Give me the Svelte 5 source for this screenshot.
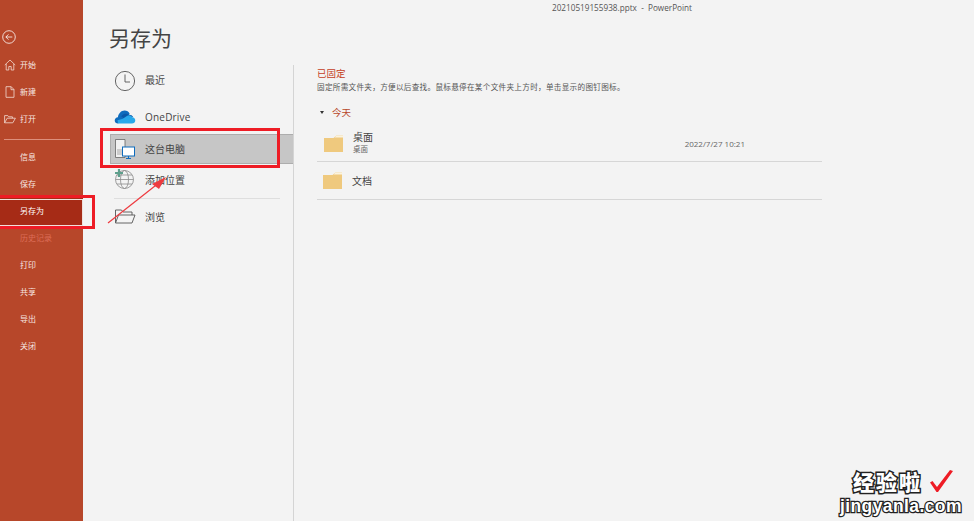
<script>
  const topItems = [
    { label: '开始', icon: 'home' },
    { label: '新建', icon: 'file' },
    { label: '打开', icon: 'open' }
  ];
  const lowerItems = [
    { label: '信息' },
    { label: '保存' },
    { label: '另存为', active: true },
    { label: '历史记录', disabled: true },
    { label: '打印' },
    { label: '共享' },
    { label: '导出' },
    { label: '关闭' }
  ];
</script>

<div class="page">
  <aside class="sidebar">
    <button class="back" aria-label="返回">
      <svg width="14" height="14" viewBox="0 0 16 16" fill="none" stroke="#fff" stroke-width="0.9">
        <circle cx="8" cy="8" r="7.2" />
        <path d="M4.400 8h7.400M7.400 5 4.400 8l3 3" />
      </svg>
    </button>
    <ul class="menu">
      {#each topItems as item}
        <li class="menu-item">
          <span class="menu-icon">
            {#if item.icon === 'home'}
              <svg width="12" height="12" viewBox="0 0 12 12" fill="none" stroke="#f3dcd3" stroke-width="0.8">
                <path d="M.8 6 6 1l5.200 5M2.200 5v6h2.600V7.500h2.400V11h2.600V5" />
              </svg>
            {:else if item.icon === 'file'}
              <svg width="12" height="12" viewBox="0 0 12 12" fill="none" stroke="#f3dcd3" stroke-width="0.8">
                <path d="M2 .7h5.200L10 3.500v7.800H2zM7 .7v3h3" />
              </svg>
            {:else}
              <svg width="12" height="12" viewBox="0 0 12 12" fill="none" stroke="#f3dcd3" stroke-width="0.8">
                <path d="M.6 9.800V2.600h3.200l1 1.200h3.600v1.400M.6 9.800h8.200l2.600-4.600H3.200z" />
              </svg>
            {/if}
          </span>
          {item.label}
        </li>
      {/each}
    </ul>
    <div class="menu-rule"></div>
    <ul class="menu">
      {#each lowerItems as item}
        <li class="menu-item" class:active={item.active} class:disabled={item.disabled}>
          <span class="menu-icon"></span>
          {item.label}
        </li>
      {/each}
    </ul>
  </aside>

  <main class="content">
    <div class="titlebar">20210519155938.pptx &nbsp;-&nbsp; PowerPoint</div>
    <h1 class="heading">另存为</h1>

    <div class="columns">
      <nav class="places">
        <div class="place recent">
          <svg width="22" height="22" viewBox="0 0 22 22" fill="none" stroke="#555" stroke-width="0.9">
            <circle cx="11" cy="11" r="9.600" />
            <path d="M11 4.500V12h5" />
          </svg>
          <span>最近</span>
        </div>
        <div class="place onedrive">
          <svg width="20" height="14" viewBox="0 0 22 15">
            <path d="M3.500 14.500C1.400 14.500 0 13 0 11.200 0 9.300 1.500 7.800 3.400 7.800 4 3.500 7 .5 10.500.5c2.500 0 4.500 1.300 5.500 3.400L13 7z" fill="#0f6cbd" />
            <path d="M8 5.500c2-1.500 5-2 7.800-.5 1.500 0 3 .8 3.800 2.200L13 11 7 7z" fill="#0a58a8" />
            <path d="M3.500 14.500h15c1.900 0 3.500-1.300 3.500-3.300 0-1.800-1.300-3.200-3.200-3.400-1-2.300-3.700-3-5.800-1.500L8.700 9.400 3 11z" fill="#28a8ea" />
          </svg>
          <span class="latin">OneDrive</span>
        </div>
        <div class="place pc">
          <svg width="20" height="20" viewBox="0 0 20 20" fill="none">
            <path d="M.5.500h9.500v18H.5z" fill="#f1f1f1" stroke="#666" stroke-width="0.8" />
            <path d="M2 11h5M2 13h5M2 15h5" stroke="#888" stroke-width="0.7" />
            <rect x="7.500" y="8" width="12" height="9" fill="#fff" stroke="#0f6cbd" />
            <path d="M13.500 17v2M11 19.500h5" stroke="#0f6cbd" />
          </svg>
          <span>这台电脑</span>
        </div>
        <div class="place add">
          <svg width="22" height="22" viewBox="0 0 22 22" fill="none" stroke="#8a8a8a" stroke-width="0.8">
            <circle cx="10.500" cy="11.500" r="9" />
            <ellipse cx="10.500" cy="11.500" rx="4" ry="9" />
            <path d="M1.500 11.500h18M3 7h15M3 16h15" />
            <path d="M5 1v8M1 5h8" stroke="#5e9f8c" stroke-width="2.200" />
          </svg>
          <span>添加位置</span>
        </div>
        <div class="place-rule"></div>
        <div class="place browse">
          <svg width="22" height="15" viewBox="0 0 22 15" fill="#f4f4f4" stroke="#555" stroke-width="0.9">
            <path d="M1.500 14V1h6l1.500 2h9v3" />
            <path d="M1.500 14h16.500l3-8H4.500z" />
          </svg>
          <span>浏览</span>
        </div>
      </nav>

      <section class="folders">
        <h2 class="pinned">已固定</h2>
        <p class="hint">固定所需文件夹，方便以后查找。鼠标悬停在某个文件夹上方时，单击显示的图钉图标。</p>
        <div class="group"><span class="caret"></span>今天</div>

        <div class="folder first">
          <svg class="folder-icon" width="19" height="17" viewBox="0 0 19 17">
            <path d="M0 3h9.500L12.500 .5H19V17H0z" fill="#efc97e" />
            <path d="M12.500 .5H19V2.500H10.500z" fill="#fbf3df" />
          </svg>
          <div class="folder-text">
            <div class="folder-name">桌面</div>
            <div class="folder-path">桌面</div>
          </div>
          <div class="folder-date">2022/7/27 10:21</div>
        </div>

        <div class="folder">
          <svg class="folder-icon" width="19" height="17" viewBox="0 0 19 17">
            <path d="M0 3h9.500L12.500 .5H19V17H0z" fill="#efc97e" />
            <path d="M12.500 .5H19V2.500H10.500z" fill="#fbf3df" />
          </svg>
          <div class="folder-text">
            <div class="folder-name">文档</div>
          </div>
        </div>
      </section>
    </div>
  </main>

  <!-- screenshot annotations -->
  <div class="mark mark-menu"></div>
  <div class="mark mark-pc"></div>
  <svg class="arrow" width="974" height="521" viewBox="0 0 974 521">
    <path d="M108 223 160 182" stroke="#ee3a3f" stroke-width="1.200" />
    <path d="M152 184l14-7-7 12z" fill="#ee3a3f" />
  </svg>

  <div class="watermark">
    <div class="wm-top">
      <span>经验啦</span>
      <svg width="24" height="24" viewBox="0 0 24 24">
        <path d="M1 13.500l2.500-1.500L8 18 21 1l3 1L9 23H7.500z" fill="#ee1c25" />
      </svg>
    </div>
    <div class="wm-url">jingyanla.com</div>
  </div>
</div>

<style>
  :global(body) {
    margin: 0;
    background: #f3f3f3;
  }

  .page {
    position: relative;
    display: flex;
    width: 974px;
    height: 521px;
    overflow: hidden;
    background: #f3f3f3;
    font-family: "Noto Sans CJK SC", "Noto Sans", sans-serif;
    color: #444;
  }

  .sidebar {
    flex: 0 0 83px;
    padding-top: 30px;
    box-sizing: border-box;
    background: #b7472a;
    color: #fff;
  }

  .back {
    display: block;
    width: 14px;
    height: 14px;
    margin: 0 0 8px 2px;
    padding: 0;
    border: 0;
    background: none;
  }

  .menu {
    list-style: none;
    margin: 0;
    padding: 0;
  }

  .menu-item {
    display: flex;
    align-items: center;
    box-sizing: border-box;
    height: 27px;
    padding-bottom: 2px;
    font-size: 8px;
    color: #f6e6e0;
  }

  .menu-icon {
    display: flex;
    flex: 0 0 20px;
    padding-left: 4px;
    box-sizing: border-box;
  }

  .menu-item.active {
    background: #a62b16;
    color: #fff;
  }

  .menu-item.disabled {
    color: #dc6d58;
  }

  .menu-rule {
    height: 1px;
    margin: 6px 13px 4px 4px;
    background: #dd8f7c;
  }

  .content {
    flex: 1;
    min-width: 0;
  }

  .titlebar {
    height: 16px;
    padding-left: 187px;
    font-size: 8.200px;
    line-height: 16px;
    text-align: center;
    color: #555;
    font-family: "Open Sans", sans-serif;
  }

  .heading {
    height: 47px;
    margin: 0;
    padding-left: 26px;
    font-size: 21px;
    font-weight: 400;
    line-height: 42px;
    color: #444;
  }

  .columns {
    display: flex;
    height: 458px;
  }

  .places {
    flex: 0 0 184px;
    margin: 2px 0 0 27px;
    box-sizing: border-box;
    border-right: 1px solid #d4d4d4;
  }

  .place {
    display: flex;
    align-items: center;
    gap: 9px;
    height: 32px;
    padding-left: 4px;
    font-size: 10px;
    color: #444;
  }

  .place svg {
    flex: 0 0 22px;
  }

  .place.recent {
    margin-top: -1px;
  }

  .recent svg {
    margin-top: 2px;
  }

  .recent span {
    padding-bottom: 2px;
  }

  .place.onedrive {
    margin-top: 5px;
  }

  .place.pc {
    box-sizing: border-box;
    width: 183px;
    height: 30px;
    margin-top: 1px;
    padding-left: 3px;
    border: 1px solid #adadad;
    border-right: 0;
    background: #c6c6c6;
  }

  .pc span {
    padding-bottom: 2px;
  }

  .place.add {
    margin-top: -1px;
  }

  .latin {
    font-family: "Open Sans", sans-serif;
    letter-spacing: 0.2px;
  }

  .place-rule {
    height: 1px;
    margin: 3px 13px 1px 4px;
    background: #dedede;
  }

  .folders {
    flex: 0 0 505px;
    margin-left: 23px;
    padding-top: 2px;
  }

  .pinned {
    margin: 0;
    font-size: 9.500px;
    font-weight: 400;
    line-height: 16px;
    color: #c43e1c;
  }

  .hint {
    margin: 0;
    font-size: 7.600px;
    line-height: 12px;
    letter-spacing: 0.3px;
    color: #555;
  }

  .group {
    display: flex;
    align-items: center;
    height: 20px;
    margin-top: 9px;
    font-size: 9.500px;
    color: #b7472a;
  }

  .caret {
    width: 0;
    height: 0;
    margin: 0 8px 0 3px;
    border-left: 2.500px solid transparent;
    border-right: 2.500px solid transparent;
    border-top: 3px solid #333;
  }

  .folder {
    display: flex;
    align-items: center;
    height: 37px;
    border-bottom: 1px solid #d6d6d6;
  }

  .folder.first {
    height: 36px;
    padding: 3px 0 0 1px;
  }

  .folder-icon {
    flex: 0 0 19px;
    margin-left: 6px;
  }

  .folder-text {
    margin-left: 10px;
  }

  .first .folder-text {
    margin-top: -2px;
  }

  .folder-name {
    font-size: 10px;
    line-height: 13px;
    color: #444;
  }

  .folder-path {
    font-size: 7.500px;
    line-height: 11px;
    color: #666;
  }

  .folder-date {
    margin-left: auto;
    padding-right: 77px;
    font-family: "Open Sans", sans-serif;
    font-size: 8px;
    color: #666;
  }

  .mark {
    position: absolute;
    box-sizing: border-box;
    border: 3px solid #ee1c25;
  }

  .mark-menu {
    left: -4px;
    top: 195px;
    width: 99px;
    height: 34px;
  }

  .mark-menu::after {
    content: "";
    position: absolute;
    left: 0;
    top: 1px;
    width: 82px;
    height: 25px;
    border: 1px solid #f0e0dc;
  }

  .mark-pc {
    left: 100px;
    top: 128px;
    width: 180px;
    height: 40px;
  }

  .arrow {
    position: absolute;
    left: 0;
    top: 0;
    pointer-events: none;
  }

  .watermark {
    position: absolute;
    right: 16px;
    bottom: 6px;
    width: 118px;
    font-weight: 900;
    color: #fff;
  }

  .wm-top {
    display: flex;
    align-items: center;
    justify-content: flex-end;
    gap: 7px;
    height: 28px;
    margin-bottom: 2px;
    padding-right: 5px;
    font-size: 21px;
    letter-spacing: 2px;
    -webkit-text-stroke: 3px #222;
    paint-order: stroke fill;
  }

  .wm-url {
    font-family: "Liberation Sans", sans-serif;
    font-weight: 700;
    font-size: 17.500px;
    line-height: 18px;
    letter-spacing: 0.4px;
    text-align: center;
    -webkit-text-stroke: 2.500px #222;
    paint-order: stroke fill;
  }
</style>
